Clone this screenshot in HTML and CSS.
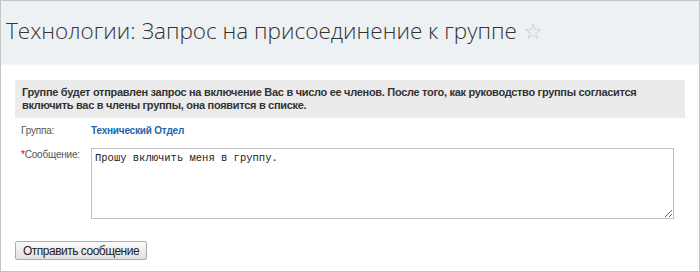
FILE: index.html
```html
<!DOCTYPE html>
<html lang="ru">
<head>
    <meta charset="UTF-8">
    <title>Запрос на присоединение к группе</title>
    <link rel="stylesheet" href="styles.css">
</head>
<body>
    <div class="page">
        <header class="page-header">
            <h1 class="page-title">Технологии: Запрос на присоединение к группе <span class="fav-star">&#9734;</span></h1>
        </header>
        <div class="content">
            <div class="notice">
                Группе будет отправлен запрос на включение Вас в число ее членов. После того, как руководство группы согласится
                включить вас в члены группы, она появится в списке.
            </div>
            <form class="request-form">
                <div class="form-row">
                    <span class="form-label">Группа:</span>
                    <a class="group-link" href="#">Технический Отдел</a>
                </div>
                <div class="form-row">
                    <label class="form-label" for="message"><span class="required">*</span>Сообщение:</label>
                    <textarea id="message" class="message-box">Прошу включить меня в группу.</textarea>
                </div>
                <button type="button" class="send-button">Отправить сообщение</button>
            </form>
        </div>
    </div>
</body>
</html>
```

FILE: styles.css
```css
body {
    margin: 0;
    font-family: Arial, "Liberation Sans", sans-serif;
    color: #333;
    background-color: #fff;
}
.page {
    box-sizing: border-box;
    width: 700px;
    height: 272px;
    border: 1px solid #c4c4c4;
    display: flex;
    flex-direction: column;
}
.page-header {
    height: 63px;
    background-color: #eef1f4;
    border-bottom: 1px solid #f4f6f8;
    padding-left: 5px;
}
.page-title {
    margin: 15px 0 0;
    font-family: "Open Sans", sans-serif;
    font-weight: 300;
    font-size: 22.5px;
    line-height: 30px;
    color: #333;
}
.fav-star {
    color: #c8c8c8;
    font-size: 22px;
    font-family: "DejaVu Sans", sans-serif;
}
.content {
    padding: 0 14px;
}
.notice {
    margin-top: 15px;
    padding: 6px 7px;
    background-color: #ebebeb;
    font-size: 11px;
    font-weight: bold;
    line-height: 13px;
    letter-spacing: -0.3px;
    color: #333;
}
.request-form {
    margin-top: 6px;
}
.form-row {
    display: grid;
    grid-template-columns: 70px 1fr;
    align-items: start;
    padding-left: 6px;
    margin-bottom: 10px;
    font-size: 10px;
    line-height: 14px;
    letter-spacing: -0.2px;
}
.form-label {
    color: #555;
}
.required {
    color: #d00;
}
.group-link {
    color: #2067b0;
    font-weight: bold;
    text-decoration: none;
}
.message-box {
    box-sizing: border-box;
    width: 583px;
    height: 71px;
    margin: 0;
    padding: 3px;
    border: 1px solid #c0c0c0;
    font-family: "Liberation Mono", "Courier New", monospace;
    font-size: 10.5px;
    letter-spacing: 0;
    color: #222;
}
.send-button {
    margin-top: 12px;
    height: 19px;
    padding: 0 7px;
    border: 1px solid #acacac;
    border-radius: 2px;
    background: linear-gradient(#fafafa, #e0e0e0);
    font-family: Arial, "Liberation Sans", sans-serif;
    font-size: 12px;
    letter-spacing: -0.5px;
    color: #222;
}
```
